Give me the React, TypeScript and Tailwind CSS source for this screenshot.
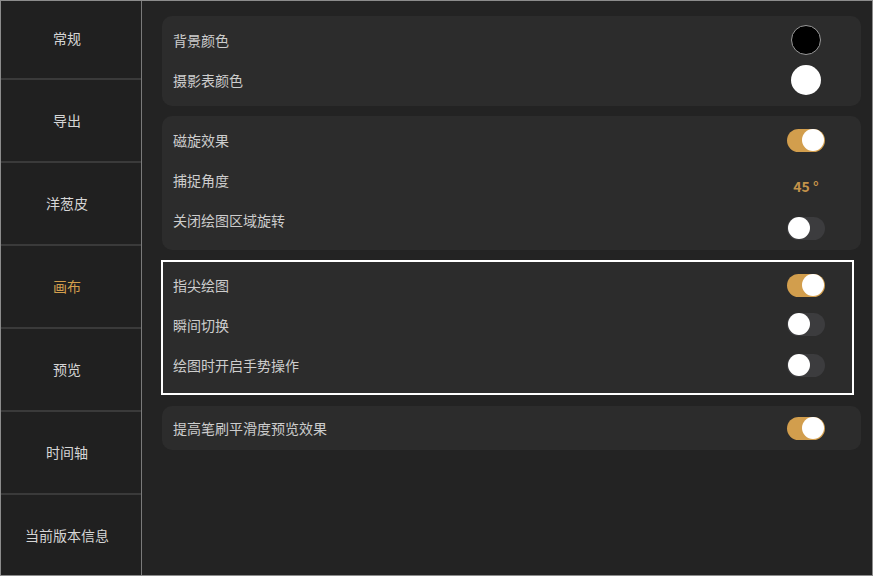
import React from "react";

const font = { fontFamily: '"Noto Sans CJK SC", "Noto Sans", sans-serif' };

function Toggle({ on }: { on: boolean }) {
  return (
    <div
      className={`relative w-[38px] h-[23px] rounded-full ${on ? "bg-[#d29e4d]" : "bg-[#3c3c3e]"}`}
    >
      <div
        className={`absolute top-[0.5px] w-[22px] h-[22px] rounded-full bg-white ${on ? "right-[1px]" : "left-[1px]"}`}
      />
    </div>
  );
}

function Row({ label, children, extra = "" }: { label: string; children?: React.ReactNode; extra?: string }) {
  return (
    <div className="h-[40px] flex items-center justify-between">
      <span className="text-[14px] text-[#cdcdcd]">{label}</span>
      <div className={`w-[40px] flex justify-center ${extra}`}>{children}</div>
    </div>
  );
}

const navItems = ["常规", "导出", "洋葱皮", "画布", "预览", "时间轴", "当前版本信息"];

export default function App() {
  return (
    <div
      className="w-[873px] h-[576px] border border-[#8c8c8c] flex bg-[#232323] overflow-hidden"
      style={font}
    >
      <div className="w-[141px] h-full border-r border-[#7a7a7a] bg-[#202020] flex flex-col">
        {navItems.map((t, i) => (
          <React.Fragment key={t}>
            {i > 0 && <div className="h-[2px] bg-[#3a3a3a]" />}
            <div
              className={`${i === 0 ? "h-[77px] pb-[3px]" : i === 6 ? "flex-1" : "h-[81px]"} pr-[8px] flex items-center justify-center text-[14px] ${
                i === 3 ? "text-[#d29e4d]" : "text-[#d6d6d6]"
              }`}
            >
              {t}
            </div>
          </React.Fragment>
        ))}
      </div>
      <div className="flex-1 flex flex-col pt-[15px] pl-[20px] pr-[11px]">
        <div className="rounded-[10px] bg-[#2c2c2c] pl-[11px] pr-[35px] pt-[4px] pb-[6px]">
          <Row label="背景颜色">
            <div className="w-[30px] h-[30px] rounded-full bg-black border border-[#9a9a9a]" />
          </Row>
          <Row label="摄影表颜色">
            <div className="w-[30px] h-[30px] rounded-full bg-white" />
          </Row>
        </div>
        <div className="mt-[10px] rounded-[10px] bg-[#2c2c2c] pl-[11px] pr-[35px] pt-[4px] pb-[10px]">
          <Row label="磁旋效果">
            <Toggle on />
          </Row>
          <Row label="捕捉角度" extra="mt-[12px]">
            <span className="text-[14px] font-semibold text-[#c4934a]">45 °</span>
          </Row>
          <Row label="关闭绘图区域旋转" extra="mt-[16px]">
            <Toggle on={false} />
          </Row>
        </div>
        <div className="mt-[10px] -ml-[1px] mr-[7px] bg-[#2c2c2c] border-2 border-white pl-[10px] pr-[26px] pt-[3px] pb-[8px]">
          <Row label="指尖绘图">
            <Toggle on />
          </Row>
          <Row label="瞬间切换" extra="-mt-[2px]">
            <Toggle on={false} />
          </Row>
          <Row label="绘图时开启手势操作">
            <Toggle on={false} />
          </Row>
        </div>
        <div className="mt-[11px] rounded-[10px] bg-[#2c2c2c] pl-[11px] pr-[35px] pt-[2px] pb-[2px]">
          <Row label="提高笔刷平滑度预览效果">
            <Toggle on />
          </Row>
        </div>
      </div>
    </div>
  );
}
